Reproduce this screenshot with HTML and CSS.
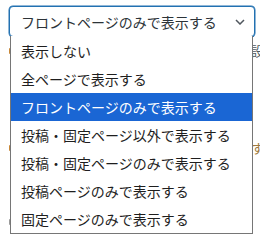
FILE: index.html
```html
<!DOCTYPE html>
<html lang="ja">
<head>
    <meta charset="UTF-8">
    <meta name="viewport" content="width=device-width, initial-scale=1.0">
    <title>表示設定</title>
    <link rel="stylesheet" href="styles.css">
</head>
<body>
    <div class="panel">
        <div class="behind">
            <div class="behind-row row-a"><span class="mark orange"></span><span class="peek"><span>設定</span></span></div>
            <div class="behind-row row-b"><span class="mark orange"></span><span class="peek"><span>す</span></span></div>
            <div class="behind-row row-c"><span class="mark gray"></span></div>
        </div>
        <div class="select">
            <span class="select-value">フロントページのみで表示する</span>
            <svg class="chevron" width="10" height="6" viewBox="0 0 10 6">
                <path d="M1 1 L5 5 L9 1" fill="none" stroke="#50575e" stroke-width="1.5"/>
            </svg>
        </div>
        <ul class="options">
            <li>表示しない</li>
            <li>全ページで表示する</li>
            <li class="highlighted">フロントページのみで表示する</li>
            <li>投稿・固定ページ以外で表示する</li>
            <li>投稿・固定ページのみで表示する</li>
            <li>投稿ページのみで表示する</li>
            <li>固定ページのみで表示する</li>
        </ul>
    </div>
</body>
</html>
```

FILE: styles.css
```css
body {
    margin: 0;
    background: #fff;
    font-family: "Noto Sans CJK JP", "Noto Sans", sans-serif;
    color: #1e1e1e;
}
.panel {
    position: relative;
    width: 260px;
    height: 241px;
    overflow: hidden;
}
.behind {
    position: absolute;
    left: 0;
    top: 0;
    width: 260px;
}
.behind-row {
    position: absolute;
    left: 0;
    width: 260px;
    height: 14px;
    display: flex;
    justify-content: space-between;
    align-items: center;
}
.row-a { top: 44px; }
.row-b { top: 141px; }
.row-c { top: 215px; }
.mark {
    margin-left: 9px;
    width: 3px;
    height: 6px;
    border-radius: 1px;
}
.orange { background: #c9893a; }
.gray { background: #9a9a9a; }
.peek {
    width: 9px;
    height: 14px;
    overflow: hidden;
    font-size: 13px;
    line-height: 14px;
    color: #50575e;
}
.peek span {
    white-space: nowrap;
}
.row-b .peek { color: #a07a40; }
.select {
    margin: 6px 0 0 9px;
    width: 246px;
    height: 31px;
    box-sizing: border-box;
    border: 1px solid #2271b1;
    border-radius: 4px;
    box-shadow: 0 0 0 0.5px #2271b1;
    background: #fff;
    display: flex;
    align-items: center;
    justify-content: space-between;
    padding: 0 9px 0 11px;
    font-size: 14px;
    color: #2c3338;
    position: relative;
}
.select-value {
    line-height: 1;
}
.chevron {
    display: block;
}
.options {
    position: absolute;
    left: 10px;
    top: 36px;
    width: 243px;
    margin: 0;
    padding: 0;
    list-style: none;
    box-sizing: border-box;
    border: 1px solid #767676;
    border-top: none;
    background: #fff;
    font-size: 14px;
}
.options li {
    height: 28px;
    line-height: 28px;
    padding-left: 10px;
    white-space: nowrap;
}
.options li:first-child {
    margin-top: 1px;
}
.options li.highlighted {
    background: #1a66d4;
    color: #fff;
}
```
